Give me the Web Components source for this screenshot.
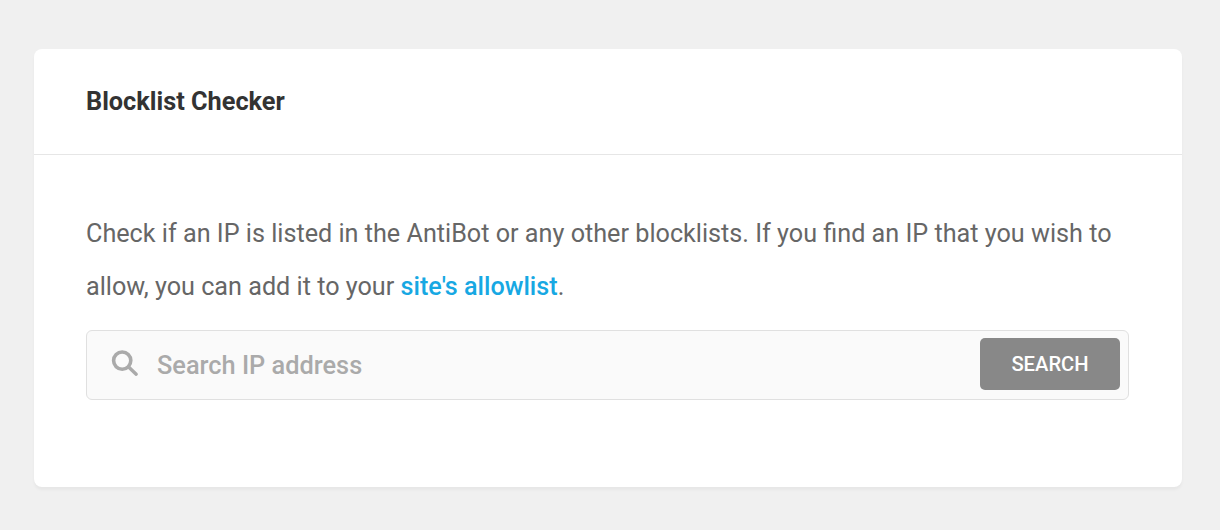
<!DOCTYPE html>
<html>
<head>
<meta charset="utf-8">
<style>
html, body { margin: 0; height: 100%; }
body { background: #f0f0f0; font-family: Roboto, "Liberation Sans", sans-serif; }
</style>
</head>
<body>
<blocklist-page>
  <blocklist-card title-text="Blocklist Checker">
    <p-text>Check if an IP is listed in the AntiBot or any other blocklists. If you find an IP that you wish to allow, you can add it to your <a href="#" style="color:#17a8e3;font-weight:500;text-decoration:none">site's allowlist</a>.</p-text>
    <ip-search placeholder="Search IP address" label="SEARCH"></ip-search>
  </blocklist-card>
</blocklist-page>
<script>
class BlocklistPage extends HTMLElement {
  connectedCallback() {
    this.attachShadow({ mode: 'open' });
    this.shadowRoot.innerHTML = `
      <style>
        :host { display: block; padding: 49px 38px 42px 34px; }
      </style>
      <slot></slot>
    `;
  }
}

class BlocklistCard extends HTMLElement {
  connectedCallback() {
    this.attachShadow({ mode: 'open' });
    this.shadowRoot.innerHTML = `
      <style>
        :host { display: block; background: #fff; border-radius: 8px; box-shadow: 0 3px 3px rgba(0,0,0,.04); height: 438px; }
        .head { height: 105px; border-bottom: 1px solid #e6e6e6; padding: 0 52px; display: flex; align-items: center; font-size: 25.3px; font-weight: 700; color: #333; }
        .body { padding: 52px 53px 0 52px; }
      </style>
      <div class="head">${this.getAttribute('title-text')}</div>
      <div class="body"><slot></slot></div>
    `;
  }
}

class PText extends HTMLElement {
  connectedCallback() {
    this.attachShadow({ mode: 'open' });
    this.shadowRoot.innerHTML = `
      <style>
        :host { display: block; font-size: 25.2px; line-height: 53px; color: #666; margin-bottom: 17px; }
      </style>
      <slot></slot>
    `;
  }
}

class IpSearch extends HTMLElement {
  connectedCallback() {
    this.attachShadow({ mode: 'open' });
    this.shadowRoot.innerHTML = `
      <style>
        :host { display: flex; align-items: center; box-sizing: border-box; height: 70px; background: #fafafa; border: 1px solid #e0e0e0; border-radius: 6px; padding: 7px 8px 9px 24px; }
        svg { width: 28px; height: 28px; flex: none; margin: 0 18px 0 0; }
        .ph { flex: 1; font-size: 25.35px; font-weight: 500; color: #aaa; padding-top: 2px; }
        button { width: 140px; height: 52px; border: 0; border-radius: 5px; background: #888; color: #fff; font: 500 20.2px Roboto, "Liberation Sans", sans-serif; }
      </style>
      <svg viewBox="0 0 28 28" fill="none" stroke="#aaa"><circle cx="11.2" cy="10.6" r="8.6" stroke-width="3.6"/><path d="M17.6 17l7.6 7.2" stroke-width="3.4" stroke-linecap="round"/></svg>
      <span class="ph">${this.getAttribute('placeholder')}</span>
      <button>${this.getAttribute('label')}</button>
    `;
  }
}

customElements.define('blocklist-page', BlocklistPage);
customElements.define('blocklist-card', BlocklistCard);
customElements.define('p-text', PText);
customElements.define('ip-search', IpSearch);
</script>
</body>
</html>
